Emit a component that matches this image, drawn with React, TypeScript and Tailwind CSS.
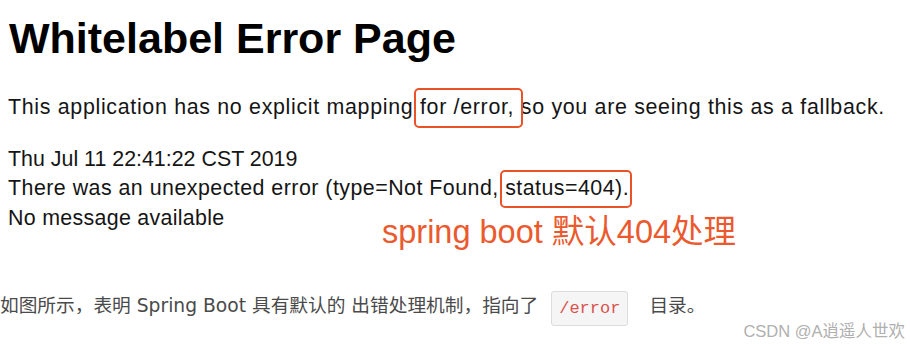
export default function App() {
  return (
    <div className="relative w-[910px] h-[344px] overflow-hidden bg-white text-[#151515] font-['Liberation_Sans','Noto_Sans_CJK_SC',sans-serif]">
      {/* screenshot of the whitelabel page */}
      <div className="pl-[8px]">
        <h1 className="pt-[13px] pl-[1px] text-[43px] leading-[50px] font-bold text-black">Whitelabel Error Page</h1>

        <p className="mt-[30px] text-[21.4px] leading-[29.5px] tracking-[0.68px]">
          This application has no explicit mapping{' '}
          <span className="relative">
            for /error,
            <span className="absolute -left-[6px] -right-[9px] -top-[7px] -bottom-[9px] rounded-[5px] border-2 border-[#ea5328]" />
          </span>{' '}
          so you are seeing this as a fallback.
        </p>

        <div className="mt-[22px] text-[21.4px] leading-[29.5px]">
          <div>Thu Jul 11 22:41:22 CST 2019</div>
          <div className="tracking-[0.47px]">
            There was an unexpected error (type=Not Found,{' '}
            <span className="relative">
              status=404).
              <span className="absolute -left-[5px] -right-[3px] -top-[6px] -bottom-[8px] rounded-[5px] border-2 border-[#ea5328]" />
            </span>
          </div>
          <div className="tracking-[0.3px]">No message available</div>
        </div>

        <div className="-mt-[19px] ml-[374px] text-[32.5px] leading-[36px] text-[#ea5a2e]">spring boot 默认404处理</div>
      </div>

      {/* article text below the image */}
      <div className="mt-[37px] flex items-center text-[18.7px] text-[#4a4a4a] font-['DejaVu_Sans','Noto_Sans_CJK_SC',sans-serif]">
        <span>如图所示，表明 Spring Boot 具有默认的 出错处理机制，指向了</span>
        <code className="ml-[13px] mt-[4px] rounded-[3px] border border-[#dcdcdc] bg-[#f5f5f5] px-[7px] py-[5px] font-['Liberation_Mono',monospace] text-[17px] leading-[23px] text-[#d9534f]">/error</code>
        <span className="ml-[21px]">目录。</span>
      </div>

      <div className="absolute right-[5px] bottom-0 text-[16.5px] text-[#b0b0b0] font-['Liberation_Sans','Noto_Sans_CJK_SC',sans-serif]">CSDN @A逍遥人世欢</div>
    </div>
  );
}
